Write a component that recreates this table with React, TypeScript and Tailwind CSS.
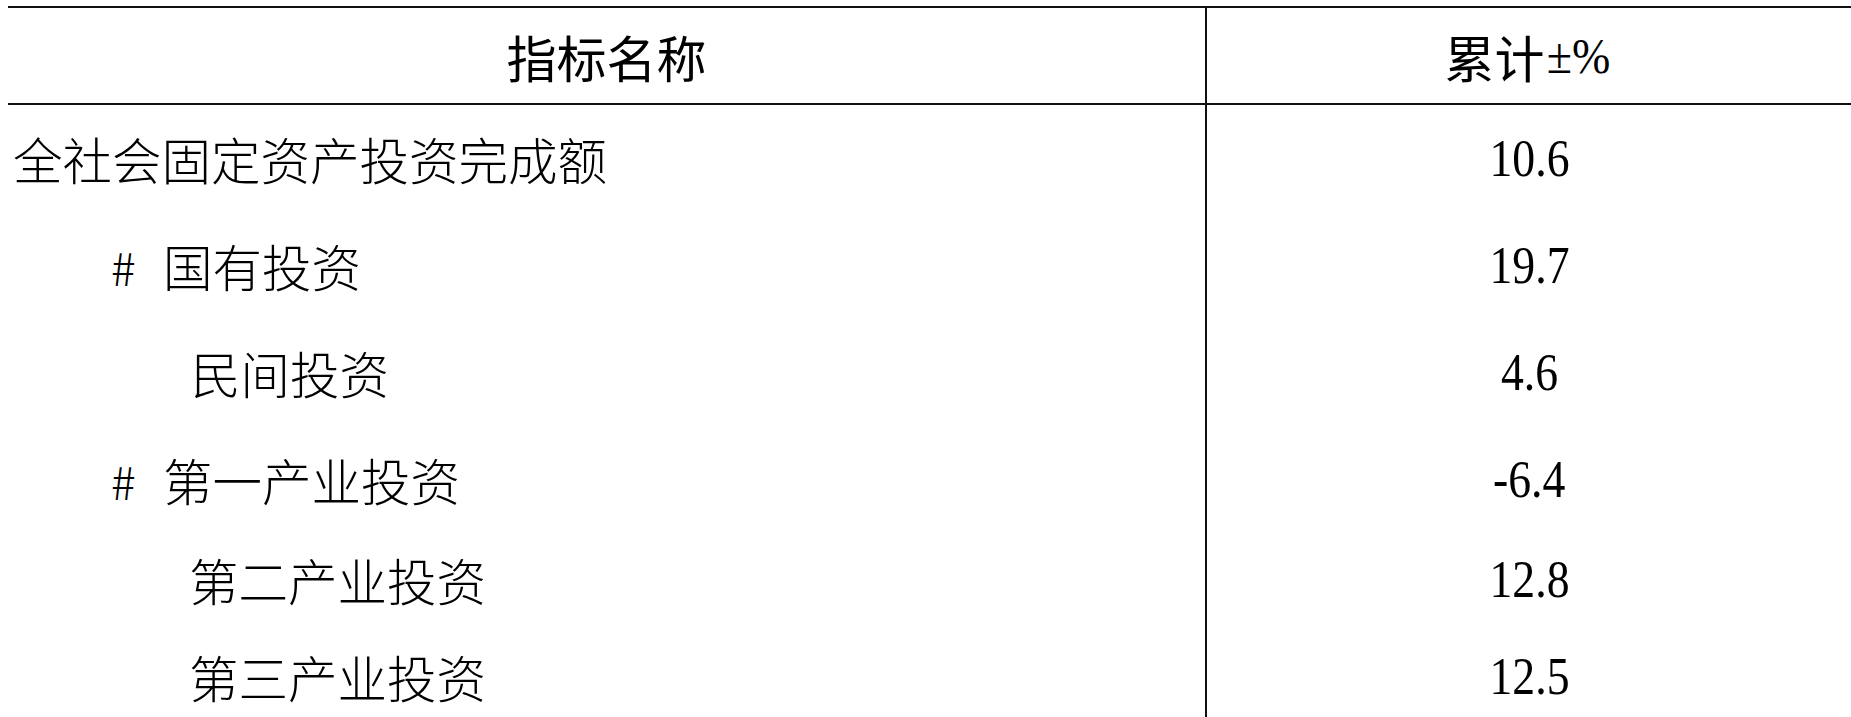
import React from "react";

type Row = { label: string; hash?: boolean; pl: string; value: string; h: string };

const rows: Row[] = [
  { label: "全社会固定资产投资完成额", pl: "pl-[5px]", value: "10.6", h: "h-[107px]" },
  { label: "国有投资", hash: true, pl: "pl-[103px]", value: "19.7", h: "h-[107px]" },
  { label: "民间投资", pl: "pl-[183px]", value: "4.6", h: "h-[107px]" },
  { label: "第一产业投资", hash: true, pl: "pl-[103px]", value: "-6.4", h: "h-[107px]" },
  { label: "第二产业投资", pl: "pl-[181px]", value: "12.8", h: "h-[94px]" },
  { label: "第三产业投资", pl: "pl-[181px]", value: "12.5", h: "h-[100px]" },
];

export default function App() {
  return (
    <div className="w-[1851px] h-[717px] overflow-hidden bg-white pl-[8px] pt-[6px] text-black">
      <div className="border-t-2 border-[#111]">
        <div className="flex h-[97px] border-b-2 border-[#111]">
          <div className="w-[1199px] shrink-0 border-r-2 border-[#111] flex items-center justify-center font-['Noto_Sans_CJK_SC',sans-serif] text-[50px] leading-none">
            指标名称
          </div>
          <div className="flex-1 flex items-center justify-center text-[50px] leading-none">
            <span className="font-['Noto_Sans_CJK_SC',sans-serif]">累计</span>
            <span className="inline-block scale-x-[0.92] font-['Liberation_Serif',serif]">±%</span>
          </div>
        </div>
        {rows.map((r) => (
          <div key={r.label} className={`flex ${r.h}`}>
            <div
              className={`w-[1199px] shrink-0 border-r-2 border-[#111] flex items-center ${r.pl} font-['Noto_Sans_CJK_SC',sans-serif] font-light text-[49.5px] leading-none`}
            >
              {r.hash && (
                <span className="w-[52px] shrink-0 font-['Noto_Sans_CJK_SC',sans-serif] font-light text-[46px]">#</span>
              )}
              <span>{r.label}</span>
            </div>
            <div className="flex-1 flex items-center justify-center font-['Liberation_Serif',serif] text-[52px] leading-none">
              <span className="inline-block scale-x-[0.88]">{r.value}</span>
            </div>
          </div>
        ))}
      </div>
    </div>
  );
}
